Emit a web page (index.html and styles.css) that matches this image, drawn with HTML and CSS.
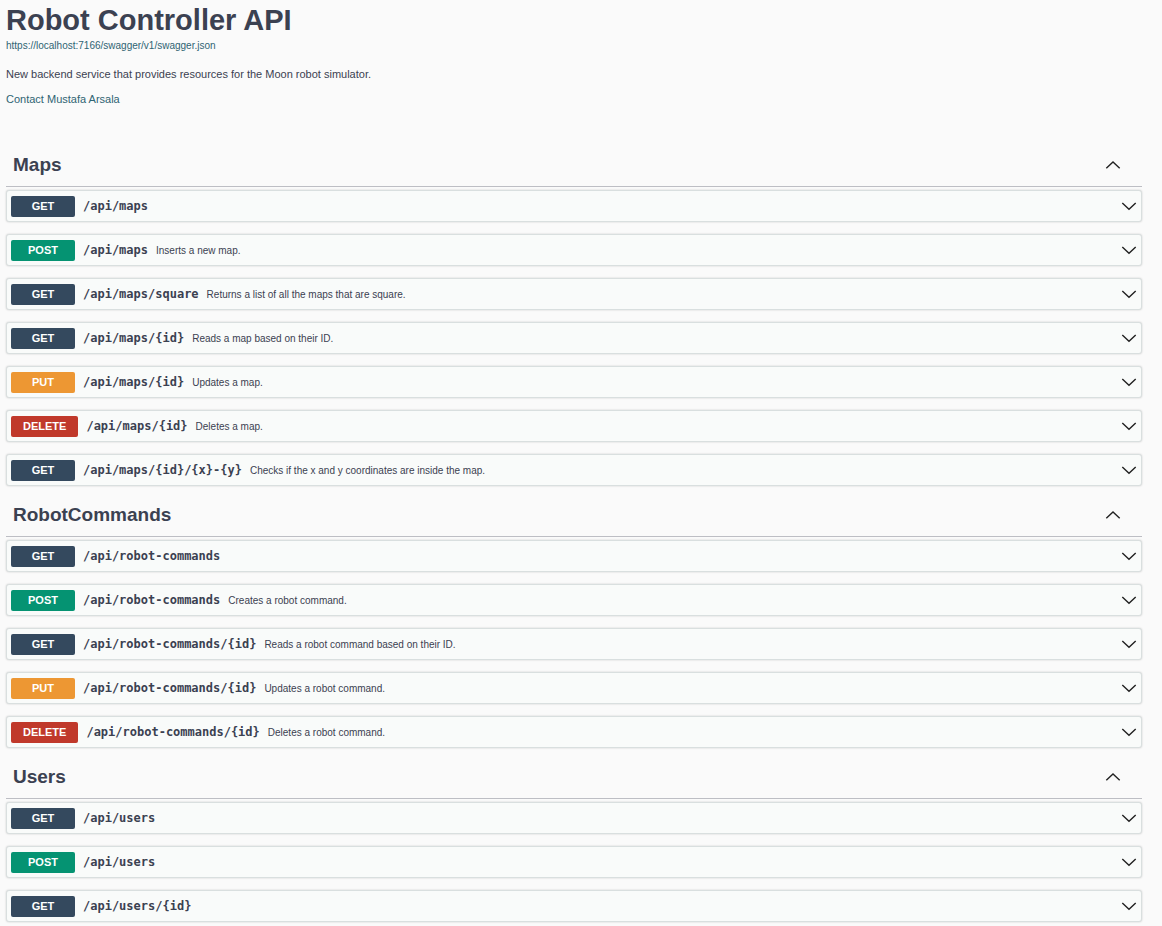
FILE: index.html
```
<!DOCTYPE html>
<html lang="en">
<head>
<meta charset="UTF-8">
<title>Robot Controller API</title>
<link rel="stylesheet" href="styles.css">
</head>
<body>

<!-- shared arrow icons -->
<svg class="sprite" aria-hidden="true">
	<symbol id="arrow-up" viewBox="0 0 16 16"><path d="M1.3 11.3L8 4.9l6.7 6.4"/></symbol>
	<symbol id="arrow-down" viewBox="0 0 16 16"><path d="M1.3 4.9L8 11.3l6.7-6.4"/></symbol>
</svg>

<header class="info">
	<h1>Robot Controller API</h1>
	<a class="spec" href="https://localhost:7166/swagger/v1/swagger.json">https://localhost:7166/swagger/v1/swagger.json</a>
	<p>New backend service that provides resources for the Moon robot simulator.</p>
	<a class="contact" href="#contact">Contact Mustafa Arsala</a>
</header>

<main>
	<section>
		<h2><button class="tag">Maps <svg class="arrow"><use href="#arrow-up"/></svg></button></h2>
		<div class="operations">
			<button class="op get"><span class="method">GET</span><span class="path">/api/maps</span><svg class="arrow"><use href="#arrow-down"/></svg></button>
			<button class="op post"><span class="method">POST</span><span class="path">/api/maps</span><span class="desc">Inserts a new map.</span><svg class="arrow"><use href="#arrow-down"/></svg></button>
			<button class="op get"><span class="method">GET</span><span class="path">/api/maps/square</span><span class="desc">Returns a list of all the maps that are square.</span><svg class="arrow"><use href="#arrow-down"/></svg></button>
			<button class="op get"><span class="method">GET</span><span class="path">/api/maps/{id}</span><span class="desc">Reads a map based on their ID.</span><svg class="arrow"><use href="#arrow-down"/></svg></button>
			<button class="op put"><span class="method">PUT</span><span class="path">/api/maps/{id}</span><span class="desc">Updates a map.</span><svg class="arrow"><use href="#arrow-down"/></svg></button>
			<button class="op delete"><span class="method">DELETE</span><span class="path">/api/maps/{id}</span><span class="desc">Deletes a map.</span><svg class="arrow"><use href="#arrow-down"/></svg></button>
			<button class="op get"><span class="method">GET</span><span class="path">/api/maps/{id}/{x}-{y}</span><span class="desc">Checks if the x and y coordinates are inside the map.</span><svg class="arrow"><use href="#arrow-down"/></svg></button>
		</div>
	</section>

	<section>
		<h2><button class="tag">RobotCommands <svg class="arrow"><use href="#arrow-up"/></svg></button></h2>
		<div class="operations">
			<button class="op get"><span class="method">GET</span><span class="path">/api/robot-commands</span><svg class="arrow"><use href="#arrow-down"/></svg></button>
			<button class="op post"><span class="method">POST</span><span class="path">/api/robot-commands</span><span class="desc">Creates a robot command.</span><svg class="arrow"><use href="#arrow-down"/></svg></button>
			<button class="op get"><span class="method">GET</span><span class="path">/api/robot-commands/{id}</span><span class="desc">Reads a robot command based on their ID.</span><svg class="arrow"><use href="#arrow-down"/></svg></button>
			<button class="op put"><span class="method">PUT</span><span class="path">/api/robot-commands/{id}</span><span class="desc">Updates a robot command.</span><svg class="arrow"><use href="#arrow-down"/></svg></button>
			<button class="op delete"><span class="method">DELETE</span><span class="path">/api/robot-commands/{id}</span><span class="desc">Deletes a robot command.</span><svg class="arrow"><use href="#arrow-down"/></svg></button>
		</div>
	</section>

	<section>
		<h2><button class="tag">Users <svg class="arrow"><use href="#arrow-up"/></svg></button></h2>
		<div class="operations">
			<button class="op get"><span class="method">GET</span><span class="path">/api/users</span><svg class="arrow"><use href="#arrow-down"/></svg></button>
			<button class="op post"><span class="method">POST</span><span class="path">/api/users</span><svg class="arrow"><use href="#arrow-down"/></svg></button>
			<button class="op get"><span class="method">GET</span><span class="path">/api/users/{id}</span><svg class="arrow"><use href="#arrow-down"/></svg></button>
		</div>
	</section>
</main>

</body>
</html>
```
FILE: styles.css
```
* {box-sizing: border-box;}
body {margin: 0; padding: 2px 20px 4px 6px; background-color: #fafafa; color: #3b4151; font-family: "Liberation Sans", Arial, sans-serif;}
button {font-family: inherit; color: inherit; cursor: pointer;}
.sprite {display: none;}

/* api info */
.info {display: flex; flex-direction: column; align-items: flex-start; padding-bottom: 31px;}
h1 {margin: 0; font-size: 29px; line-height: 36px;}
a {color: #2f6473; text-decoration: none;}
a:hover {text-decoration: underline;}
.spec {font-size: 10px; line-height: 16px;}
.info p {margin: 12px 0 11px; font-size: 11px; line-height: 16px;}
.contact {font-size: 11px; line-height: 12px;}

/* section headings */
h2 {margin: 0 0 3px; border-bottom: 1px solid #bdbec4;}
.tag {display: flex; justify-content: space-between; align-items: center; width: 100%; padding: 16px 21px 8px 7px; border: 0; background: none; font-size: 19px; line-height: 26px; font-weight: bold;}
.arrow {width: 16px; height: 16px; fill: none; stroke: #222; stroke-width: 1.4;}

/* operation rows */
.operations {display: flex; flex-direction: column; gap: 12px;}
.op {display: flex; align-items: center; gap: 8px; height: 32px; padding: 0 4px; border: 1px solid #d9dfdf; border-radius: 3px; background-color: #f9fbfa; box-shadow: 0 0 2px rgba(0, 0, 0, 0.2);}
.op .arrow {margin-left: auto;}
.method {min-width: 64px; padding: 0 12px; border-radius: 2px; color: #fff; font-size: 11px; line-height: 21px; font-weight: bold; text-align: center;}
.get .method {background-color: #34495e;}
.post .method {background-color: #059372;}
.put .method {background-color: #ed9733;}
.delete .method {background-color: #c0392b;}
.path {font-family: "DejaVu Sans Mono", monospace; font-size: 12px; font-weight: bold;}
.desc {font-size: 10px;}
```
